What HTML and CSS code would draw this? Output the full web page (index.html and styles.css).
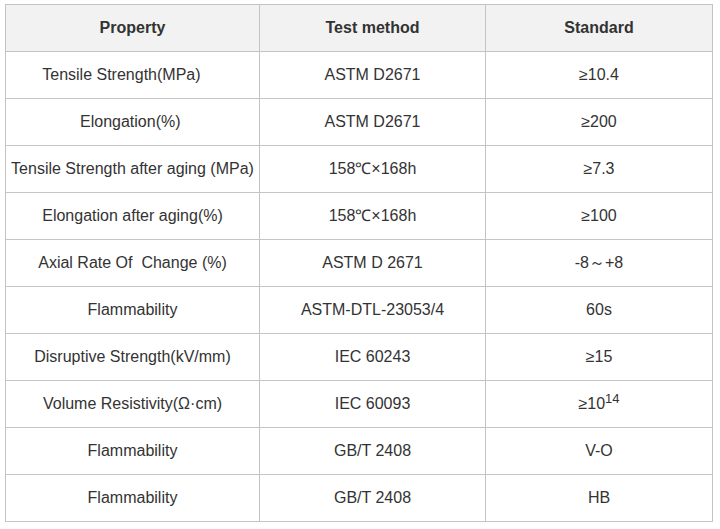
FILE: index.html
```html
<!DOCTYPE html>
<html>
<head>
<meta charset="utf-8">
<link rel="stylesheet" href="styles.css">
</head>
<body>
<div class="wrap">
<table class="spec">
<colgroup><col class="c1"><col class="c2"><col class="c3"></colgroup>
<thead>
<tr><th>Property</th><th>Test method</th><th>Standard</th></tr>
</thead>
<tbody>
<tr><td>Tensile Strength(MPa)&nbsp;&nbsp;&nbsp;&nbsp;&nbsp;</td><td>ASTM D2671</td><td>≥10.4</td></tr>
<tr><td>Elongation(%)&nbsp;</td><td>ASTM D2671</td><td>≥200</td></tr>
<tr><td>Tensile Strength after aging (MPa)</td><td>158℃×168h</td><td>≥7.3</td></tr>
<tr><td>Elongation after aging(%)</td><td>158℃×168h</td><td>≥100</td></tr>
<tr><td>Axial Rate Of&nbsp; Change (%)</td><td>ASTM D 2671</td><td>-8～+8</td></tr>
<tr><td>Flammability</td><td>ASTM-DTL-23053/4</td><td>60s</td></tr>
<tr><td>Disruptive Strength(kV/mm)</td><td>IEC 60243</td><td>≥15</td></tr>
<tr><td>Volume Resistivity(Ω·cm)</td><td>IEC 60093</td><td>≥10<sup>14</sup></td></tr>
<tr><td>Flammability</td><td>GB/T 2408</td><td>V-O</td></tr>
<tr><td>Flammability</td><td>GB/T 2408</td><td>HB</td></tr>
</tbody>
</table>
</div>
</body>
</html>
```
FILE: styles.css
```css
html, body {
  margin: 0;
  padding: 0;
  background: #ffffff;
}
.wrap {
  padding: 4px 0 0 5px;
}
.spec {
  border-collapse: collapse;
  width: 707px;
  table-layout: fixed;
  font-family: "Liberation Sans", Arial, sans-serif;
  font-size: 16px;
  line-height: 20px;
  color: #333333;
}
.c1 { width: 254px; }
.c2 { width: 226px; }
.c3 { width: 227px; }
.spec th, .spec td {
  border: 1px solid #c4c4c4;
  height: 45px;
  padding: 0 0 1px 0;
  text-align: center;
  vertical-align: middle;
}
.spec th {
  background: #f2f2f2;
  font-weight: bold;
}
.spec sup {
  font-size: 13px;
  vertical-align: 6px;
  line-height: 0;
}
```
